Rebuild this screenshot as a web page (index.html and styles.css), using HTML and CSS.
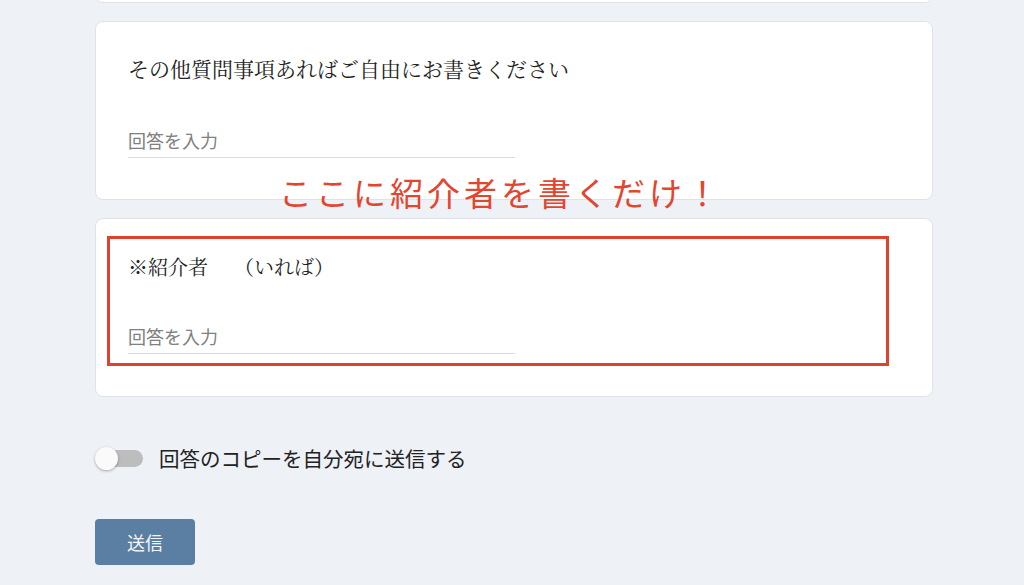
FILE: index.html
```html
<!DOCTYPE html>
<html lang="ja">
<head>
    <meta charset="UTF-8">
    <meta name="viewport" content="width=device-width, initial-scale=1.0">
    <title>フォーム</title>
    <link rel="stylesheet" href="styles.css">
</head>
<body>

<div class="form-wrap">
    <div class="card card-prev"></div>

    <div class="card">
        <div class="question">その他質問事項あればご自由にお書きください</div>
        <input class="answer" type="text" placeholder="回答を入力">
    </div>

    <div class="card card-referrer">
        <div class="note">ここに紹介者を書くだけ！</div>
        <div class="highlight"></div>
        <div class="question">※紹介者<span class="aside">（いれば）</span></div>
        <input class="answer" type="text" placeholder="回答を入力">
    </div>

    <label class="copy-row">
        <span class="toggle"><span class="knob"></span></span>
        <span>回答のコピーを自分宛に送信する</span>
    </label>

    <button class="submit" type="button">送信</button>
</div>

</body>
</html>
```

FILE: styles.css
```css
body {
    margin: 0;
    background-color: #eef1f6;
    font-family: "Noto Sans CJK JP", "Noto Sans", sans-serif;
    height: 585px;
    overflow: hidden;
}
.form-wrap {
    width: 838px;
    margin-left: 95px;
    display: flex;
    flex-direction: column;
    gap: 18px;
}
.card {
    position: relative;
    background-color: white;
    border: 1px solid #dfe3e8;
    border-radius: 8px;
    height: 177px;
    padding: 0 32px;
    box-sizing: content-box;
}
.card-prev {
    margin-top: -176px;
}
.question {
    padding-top: 31px;
    font-family: "Noto Serif CJK JP", "Noto Sans CJK JP", serif;
    font-size: 21px;
    line-height: 30px;
    color: #222;
}
.card-referrer .question {
    padding-top: 33px;
    font-size: 20px;
}
.aside {
    margin-left: 26px;
}
.answer {
    display: block;
    width: 387px;
    margin-top: 45px;
    padding: 0 0 4px 0;
    border: none;
    border-bottom: 1px solid #dcdcdc;
    outline: none;
    background: transparent;
    font-family: "Noto Sans CJK JP", sans-serif;
    font-size: 18px;
    line-height: 25px;
    color: #333;
}
.card-referrer .answer {
    margin-top: 42px;
}
.answer::placeholder {
    color: #808080;
}
.highlight {
    position: absolute;
    left: 11px;
    top: 17px;
    width: 776px;
    height: 124px;
    border: 3px solid #e0432d;
}
.note {
    position: absolute;
    left: 183px;
    top: -49px;
    font-size: 33px;
    line-height: 44px;
    letter-spacing: 4px;
    color: #e2462f;
    white-space: nowrap;
}
.copy-row {
    display: flex;
    align-items: center;
    gap: 16px;
    margin-top: 28px;
    font-size: 20.5px;
    color: #222;
}
.toggle {
    position: relative;
    width: 46px;
    height: 17px;
    margin-left: 2px;
    border-radius: 9px;
    background-color: #bdbdbd;
}
.knob {
    position: absolute;
    left: -2px;
    top: -3px;
    width: 23px;
    height: 23px;
    border-radius: 50%;
    background-color: #fafafa;
    box-shadow: 0px 1px 3px rgba(0, 0, 0, 0.3);
}
.submit {
    align-self: flex-start;
    width: 100px;
    height: 46px;
    margin-top: 28px;
    border: none;
    border-radius: 4px;
    background-color: #5b7fa3;
    color: #f2f5f8;
    font-family: "Noto Sans CJK JP", sans-serif;
    font-size: 18px;
    cursor: pointer;
}
```
